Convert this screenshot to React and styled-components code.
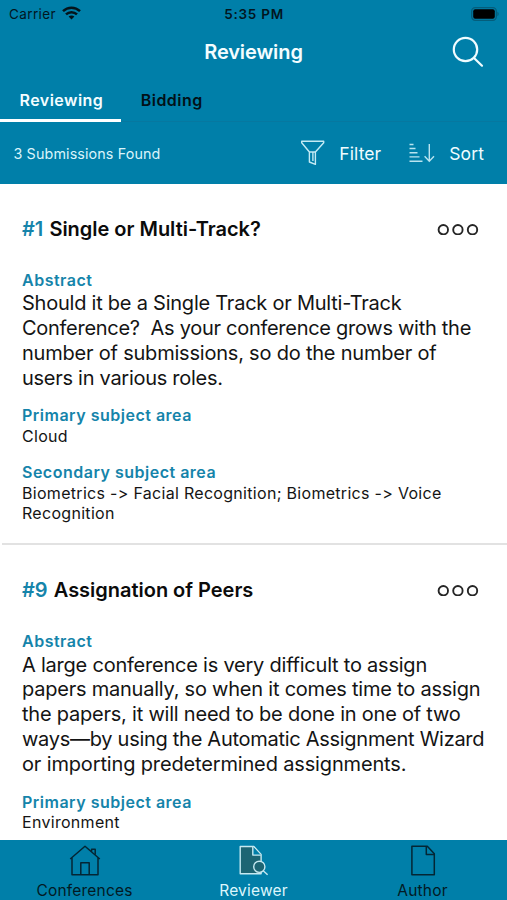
import React from "react";
import styled, { createGlobalStyle } from "styled-components";

const BLUE = "#007fa9";

const Global = createGlobalStyle`
  * { box-sizing: border-box; }
  body { margin: 0; background: #fff; font-family: Inter, "Noto Sans", sans-serif; color: #141414; }
  svg { display: block; flex: none; }
`;

const Screen = styled.div`
  width: 507px;
  height: 900px;
  display: flex;
  flex-direction: column;
  overflow: hidden;
  background: #fff;
`;

const Header = styled.header`
  flex: none;
  height: 184px;
  background: ${BLUE};
  color: #f4fdff;
`;

const StatusBar = styled.div`
  display: grid;
  grid-template-columns: 1fr auto 1fr;
  align-items: center;
  height: 28px;
  padding: 0 8px 0 9px;
  font-size: 13.5px;
  line-height: 28px;
  color: #02161f;
`;

const Carrier = styled.div`
  display: flex;
  align-items: center;
  gap: 6px;
  letter-spacing: 0.38px;
  svg { margin-top: -2px; }
`;

const Clock = styled.div`
  font-weight: 600;
  letter-spacing: 0.75px;
`;

const Battery = styled.div`
  justify-self: end;
  margin: -1px 0 0;
`;

const NavBar = styled.div`
  display: grid;
  grid-template-columns: 1fr auto 1fr;
  align-items: center;
  height: 48px;
  padding: 0 23px;
`;

const NavTitle = styled.h1`
  grid-column: 2;
  margin: 0;
  font-size: 20px;
  font-weight: 600;
  line-height: 24px;
  letter-spacing: -0.1px;
`;

const NavAction = styled.div`
  justify-self: end;
`;

const Tabs = styled.nav`
  display: flex;
  height: 46px;
  border-bottom: 1px solid #0678a0;
`;

const Tab = styled.div`
  height: 46px;
  padding: 14px 18px 0 19.5px;
  border-bottom: 3px solid ${(p) => (p.$active ? "#fff" : "transparent")};
  color: ${(p) => (p.$active ? "#f4fdff" : "#021118")};
  font-size: 16px;
  font-weight: 600;
  line-height: 20px;
  letter-spacing: 0.46px;
`;

const Toolbar = styled.div`
  display: flex;
  align-items: center;
  height: 62px;
  padding: 1px 23px 0 13.5px;
`;

const Count = styled.div`
  flex: 1;
  font-size: 14.3px;
  letter-spacing: 0.13px;
  color: #daf4fb;
`;

const ToolButton = styled.div`
  display: flex;
  align-items: center;
  gap: 14px;
  margin-left: ${(p) => p.$lead || 0}px;
  font-size: 17.5px;
  letter-spacing: 0.1px;
  color: #effcff;
  svg { margin-top: -1px; }
`;

const List = styled.main`
  flex: 1;
  min-height: 0;
  overflow: hidden;
`;

const Card = styled.article`
  padding: 33px 20px 19px 22px;
`;

const Divider = styled.hr`
  height: 2px;
  margin: 0 0 0 2px;
  border: 0;
  background: #e2e2e2;
`;

const CardHead = styled.div`
  display: flex;
  align-items: center;
  justify-content: space-between;
  height: 24px;
  margin-bottom: 29px;
  padding-right: 8px;
`;

const CardTitle = styled.h2`
  margin: 0;
  font-size: 20px;
  font-weight: 600;
  line-height: 24px;
  letter-spacing: -0.02px;
  color: #0b0b0b;
`;

const Number = styled.span`
  margin-right: 1.1px;
  color: #1584aa;
`;

const Field = styled.section`
  & + & { margin-top: 15px; }
`;

const Label = styled.h3`
  margin: 0;
  font-size: 16px;
  font-weight: 600;
  line-height: 20px;
  letter-spacing: 0.5px;
  color: #1584aa;
`;

const Abstract = styled.p`
  margin: 1.2px 0 0;
  font-size: 20px;
  line-height: 24.8px;
`;

const Line = styled.span`
  display: block;
  white-space: nowrap;
  letter-spacing: ${(p) => p.$tracking}px;
`;

const Value = styled.p`
  margin: 0;
  padding: 0.5px 0 0.8px;
  font-size: 16px;
  line-height: 20.5px;
  letter-spacing: 0.3px;
  white-space: pre-line;
`;

const TabBar = styled.footer`
  flex: none;
  display: grid;
  grid-template-columns: repeat(3, 1fr);
  height: 60px;
  background: ${BLUE};
`;

const TabItem = styled.div`
  display: flex;
  flex-direction: column;
  align-items: center;
  padding-top: 4px;
  font-size: 15.5px;
  line-height: 20px;
  letter-spacing: 0.2px;
  color: ${(p) => (p.$active ? "#dcf6fc" : "#031a24")};
  svg { margin-bottom: 5px; }
`;

const WifiIcon = () => (
  <svg width="19" height="14" viewBox="0 0 19 14" fill="none" stroke="#04141b" strokeWidth="2.5">
    <path d="M1 5.2C5.8.6 13.2.6 18 5.2" />
    <path d="M4 8.4c3.1-3 7.9-3 11 0" />
    <path d="M9.5 13.4 6.6 10.6c1.6-1.5 4.2-1.5 5.8 0z" fill="#04141b" stroke="none" />
  </svg>
);

const BatteryIcon = () => (
  <svg width="29" height="14" viewBox="0 0 29 14">
    <rect x="1.7" y="0.7" width="24.6" height="12.6" rx="3.5" fill="none" stroke="#045d7b" strokeWidth="1.3" />
    <rect x="3.2" y="2.2" width="21.6" height="9.6" rx="2" fill="#000" />
    <path d="M27.4 4.8c1.7.7 1.7 3.7 0 4.4z" fill="#045d7b" />
  </svg>
);

const SearchIcon = () => (
  <svg width="32" height="32" viewBox="0 0 32 32" fill="none" stroke="#f0fcff" strokeWidth="2.2" strokeLinecap="round">
    <circle cx="13.5" cy="13.5" r="11.7" />
    <path d="M22 22l8 7.7" />
  </svg>
);

const FilterIcon = () => (
  <svg width="24" height="26" viewBox="0 0 24 26" fill="none" stroke="#c4eaf4" strokeWidth="1.4" strokeLinejoin="round">
    <path d="M.7 1.2h22v1.5L14.4 12v12.4l-6-2.4V12L.7 2.7z" />
    <path d="M8.4 12h6M11.9 12v9" />
  </svg>
);

const SortIcon = () => (
  <svg width="26" height="20" viewBox="0 0 26 20" fill="none" stroke="#b9e4f0" strokeWidth="1.4">
    <path d="M.5 1.5h4M.5 5.5h6M.5 9.7h8M.5 13.9h10M.5 18.2h13" />
    <path d="M20.3 1v17M15.6 13.3l4.7 4.9 4.7-4.9" />
  </svg>
);

const MoreIcon = () => (
  <svg width="42" height="12" viewBox="0 0 42 12" fill="none" stroke="#252525" strokeWidth="1.9">
    <circle cx="6.3" cy="6.7" r="4.7" />
    <circle cx="20.9" cy="6.7" r="4.7" />
    <circle cx="35.5" cy="6.7" r="4.7" />
  </svg>
);

const HomeIcon = () => (
  <svg width="32" height="32" viewBox="0 0 32 32" fill="none" stroke="#042634" strokeWidth="1.5" strokeLinejoin="round">
    <path d="M1.2 15 16 2.3 30.8 15M3 13.5v17.2h26V13.5" />
    <path d="M11.8 30.5V18.7h8.4v11.8M22.6 7.5V5.3h3.6v5.4" />
  </svg>
);

const ReviewIcon = () => (
  <svg width="32" height="32" viewBox="0 0 32 32" fill="#1d6573" stroke="#c6e9f1" strokeWidth="1.4" strokeLinejoin="round">
    <path d="M2.2 2.5h13.6l7.3 8v19.2H2.2z" />
    <path d="M14.8 2.8v8.3h8" fill={BLUE} />
    <circle cx="21.3" cy="22.8" r="5.6" />
    <path d="M25.2 26.8l4.4 4" />
  </svg>
);

const DocumentIcon = () => (
  <svg width="32" height="32" viewBox="0 0 32 32" fill="none" stroke="#042634" strokeWidth="1.5" strokeLinejoin="round">
    <path d="M4.9 2.2h15.4l7 7.6v20.9H4.9z" />
    <path d="M19.3 2.4v8h7.8" />
  </svg>
);

const submissions = [
  {
    id: 1,
    title: "Single or Multi-Track?",
    abstract: [
      ["Should it be a Single Track or Multi-Track", -0.235],
      ["Conference?\u00a0 As your conference grows with the", -0.28],
      ["number of submissions, so do the number of", -0.21],
      ["users in various roles.", -0.28],
    ],
    areas: [
      ["Primary subject area", "Cloud"],
      ["Secondary subject area", "Biometrics -> Facial Recognition; Biometrics -> Voice\nRecognition"],
    ],
  },
  {
    id: 9,
    title: "Assignation of Peers",
    abstract: [
      ["A large conference is very difficult to assign", -0.225],
      ["papers manually, so when it comes time to assign", -0.225],
      ["the papers, it will need to be done in one of two", -0.22],
      ["ways—by using the Automatic Assignment Wizard", -0.28],
      ["or importing predetermined assignments.", -0.15],
    ],
    areas: [["Primary subject area", "Environment"]],
  },
];

const Submission = ({ item }) => (
  <Card>
    <CardHead>
      <CardTitle>
        <Number>#{item.id}</Number> {item.title}
      </CardTitle>
      <MoreIcon />
    </CardHead>
    <Field>
      <Label>Abstract</Label>
      <Abstract>
        {item.abstract.map(([text, tracking]) => (
          <Line key={text} $tracking={tracking}>
            {text}
          </Line>
        ))}
      </Abstract>
    </Field>
    {item.areas.map(([label, value]) => (
      <Field key={label}>
        <Label>{label}</Label>
        <Value>{value}</Value>
      </Field>
    ))}
  </Card>
);

export default function App() {
  return (
    <Screen>
      <Global />
      <Header>
        <StatusBar>
          <Carrier>
            Carrier
            <WifiIcon />
          </Carrier>
          <Clock>5:35 PM</Clock>
          <Battery>
            <BatteryIcon />
          </Battery>
        </StatusBar>
        <NavBar>
          <NavTitle>Reviewing</NavTitle>
          <NavAction>
            <SearchIcon />
          </NavAction>
        </NavBar>
        <Tabs>
          <Tab $active>Reviewing</Tab>
          <Tab>Bidding</Tab>
        </Tabs>
        <Toolbar>
          <Count>3 Submissions Found</Count>
          <ToolButton>
            <FilterIcon />
            Filter
          </ToolButton>
          <ToolButton $lead={28}>
            <SortIcon />
            Sort
          </ToolButton>
        </Toolbar>
      </Header>
      <List>
        <Submission item={submissions[0]} />
        <Divider />
        <Submission item={submissions[1]} />
      </List>
      <TabBar>
        <TabItem>
          <HomeIcon />
          Conferences
        </TabItem>
        <TabItem $active>
          <ReviewIcon />
          Reviewer
        </TabItem>
        <TabItem>
          <DocumentIcon />
          Author
        </TabItem>
      </TabBar>
    </Screen>
  );
}
